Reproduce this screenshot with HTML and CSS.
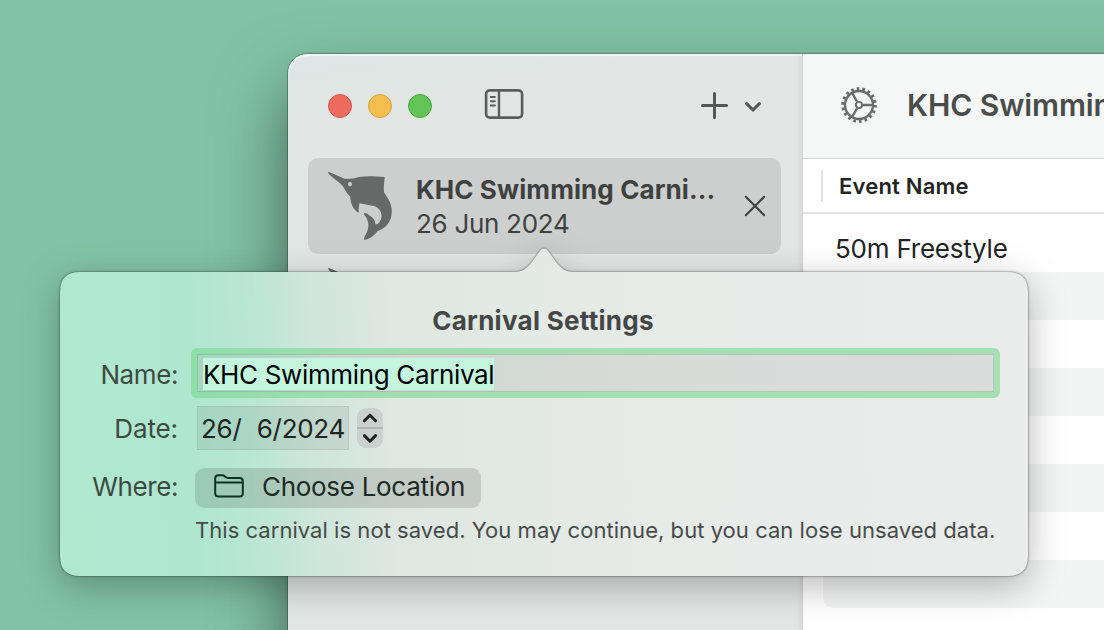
FILE: index.html
```html
<!DOCTYPE html>
<html lang="en">
<head>
<meta charset="utf-8">
<title>KHC Swimming Carnival</title>
<link rel="stylesheet" href="styles.css">
</head>
<body>
<svg class="defs" width="0" height="0" aria-hidden="true">
  <symbol id="marlin" viewBox="0 0 80 85">
    <path fill-rule="evenodd" d="M8.4 10 C8.7 9.7 9.5 10 10.3 10.5 L24.5 16.8 C29 16.8 32 16.6 34.5 16.2 C41 14.3 48 13.6 64.7 15 C64.5 20 63.2 25 64 30 C66.5 35 71.8 40 71.8 49.5 C71.8 60 65 67 57.5 69 C55 73 50 77 44.3 78 C43.5 76 44.8 74.5 45.7 72.5 C50.5 64 48.5 58 43.7 52 C44.5 50.3 47 51 49.5 53.5 C54 56 55 58.5 55.5 62.5 C58 62.8 60.8 59 61.5 55 C62.3 49 57 44 52.5 43.8 L39.5 41.2 C38.8 44 38.5 47 38.7 50.7 C34.8 49 31.5 44 30.6 38 L30.2 34.8 C27 31.5 25.5 29 23.7 25.5 C22 22 17 19 9.5 12.7 C8.4 11.8 8 10.7 8.4 10 Z M30 20 a2 2.2 0 1 0 .01 0 Z"/>
  </symbol>
</svg>

<div class="window">
  <aside class="sidebar">
    <header class="sidebar-bar">
      <div class="lights">
        <span class="light close"></span>
        <span class="light minimise"></span>
        <span class="light zoom"></span>
      </div>
      <svg class="toggle" width="40" height="32" viewBox="0 0 40 32" fill="none" stroke="#5b5d5c" stroke-linecap="round">
        <rect x="2.1" y="2.4" width="36" height="27.2" rx="3.6" stroke-width="2.6"/>
        <path d="M15 3v26" stroke-width="2.4"/>
        <path d="M6.8 9h4M6.8 13.3h4M6.8 17.6h4" stroke-width="2"/>
      </svg>
      <svg class="add" width="28" height="28" viewBox="0 0 28 28" fill="none" stroke="#555756" stroke-width="3" stroke-linecap="round">
        <path d="M14.500 1.500v24M2.500 13.500h24"/>
      </svg>
      <svg class="more" width="18" height="12" viewBox="0 0 18 12" fill="none" stroke="#555756" stroke-width="3.1" stroke-linecap="round" stroke-linejoin="round">
        <path d="M2.6 2.6L9 9l6.4-6.4"/>
      </svg>
    </header>
    <div class="carnival selected">
      <svg class="marlin" width="80" height="85"><use href="#marlin"/></svg>
      <div class="carnival-text">
        <div class="carnival-name">KHC Swimming Carni...</div>
        <div class="carnival-date">26 Jun 2024</div>
      </div>
      <svg class="remove" width="22" height="22" viewBox="0 0 22 22" stroke="#3d3f3e" stroke-width="2" stroke-linecap="round">
        <path d="M1.8 1.8l18.4 18.4M20.2 1.8L1.8 20.2"/>
      </svg>
    </div>
    <div class="carnival">
      <svg class="marlin" width="80" height="85"><use href="#marlin"/></svg>
    </div>
  </aside>
  <main class="content">
    <header class="title-bar">
      <svg class="gear" width="38" height="38" viewBox="-19 -19 38 38" fill="none" stroke="#6a6c6b">
        <circle r="16.3" stroke-width="3" stroke-dasharray="2.7 2.99"/>
        <circle r="14" stroke-width="2.3"/>
        <circle r="3.1" stroke-width="1.9"/>
        <path d="M4 0H14M-2 -3.5L-7 -12.1M-2 3.5L-7 12.1" stroke-width="2.3"/>
      </svg>
      <h1>KHC Swimming Carnival</h1>
    </header>
    <div class="table-head"><span>Event Name</span></div>
    <div class="table">
      <div class="row first">50m Freestyle</div>
      <div class="row alt"></div>
      <div class="row"></div>
      <div class="row alt"></div>
      <div class="row"></div>
      <div class="row alt"></div>
      <div class="row"></div>
      <div class="row alt"></div>
    </div>
  </main>
</div>

<div class="popover">
  <svg class="popover-shape" width="968" height="330" viewBox="0 -26 968 330">
    <defs>
      <linearGradient id="glass" x1="0" x2="968" y1="30" y2="0" gradientUnits="userSpaceOnUse">
        <stop offset="0" stop-color="#b1e8d0"/>
        <stop offset=".13" stop-color="#afe6cf"/>
        <stop offset=".19" stop-color="#b9e6d2"/>
        <stop offset=".26" stop-color="#cfe6db"/>
        <stop offset=".35" stop-color="#e0e7e2"/>
        <stop offset=".6" stop-color="#e6ebe8"/>
        <stop offset="1" stop-color="#ebecec"/>
      </linearGradient>
    </defs>
    <path fill="url(#glass)" d="M20 0H453C462 0 466 -3 470 -7.500L479.500 -20.500C482 -24.500 486 -24.500 488.500 -20.500L498 -7.500C502 -3 506 0 515 0H948Q968 0 968 20V284Q968 304 948 304H20Q0 304 0 284V20Q0 0 20 0Z"/>
  </svg>
  <div class="popover-body">
    <h2>Carnival Settings</h2>
    <div class="form">
      <label class="l-name">Name:</label>
      <div class="field"><span class="highlight">KHC Swimming Carnival</span></div>
      <label class="l-date">Date:</label>
      <div class="date-line">
        <div class="date">26/<span class="month">6/2024</span></div>
        <div class="stepper">
          <svg width="26" height="40" viewBox="0 0 26 40" fill="none" stroke="#1d2421" stroke-width="3" stroke-linecap="round" stroke-linejoin="round">
            <path d="M7.400 12.800L13 7.200l5.600 5.600M7.400 27.600L13 33.200l5.600-5.600"/>
          </svg>
        </div>
      </div>
      <label class="l-where">Where:</label>
      <div class="where-line">
        <button class="choose">
          <svg width="30" height="24" viewBox="0 0 30 24" fill="none" stroke="#0c3322" stroke-width="2" stroke-linejoin="round">
            <path d="M1.200 19.500V4.500Q1.200 1.200 4.500 1.200H8.200Q9.600 1.200 10.700 2.200L11.600 3Q12.600 3.900 14 3.900H25.500Q28.800 3.900 28.800 7V19.500Q28.800 22.600 25.500 22.600H4.500Q1.200 22.600 1.200 19.500ZM1.200 8.500H28.800"/>
          </svg>
          <span>Choose Location</span>
        </button>
      </div>
      <p class="note">This carnival is not saved. You may continue, but you can lose unsaved data.</p>
    </div>
  </div>
</div>
</body>
</html>
```

FILE: styles.css
```css
* { box-sizing: border-box; }

body {
  margin: 0;
  width: 1104px;
  height: 630px;
  overflow: hidden;
  position: relative;
  padding: 54px 0 0 288px;
  background: #82c3a6;
  font-family: Inter, Roboto, sans-serif;
  font-size: 26px;
  line-height: 32px;
  color: #232524;
  white-space: nowrap;
}

h1, h2, p { margin: 0; }
svg { display: block; flex: none; }
.defs { position: absolute; }

.window {
  display: flex;
  width: 1400px;
  height: 900px;
  border-radius: 20px;
  box-shadow: 0 0 1px 1px rgba(0, 0, 0, .28), 0 36px 70px rgba(0, 0, 0, .5);
}

.sidebar {
  width: 515px;
  flex: none;
  padding: 0 21px 0 20px;
  border-radius: 20px 0 0 0;
  border-right: 1px solid #cdd1cf;
  background: linear-gradient(170deg, #dde7e5 0, #e1e6e4 70px, #e4e6e5 130px);
  box-shadow: inset 0 2px 1px rgba(255, 255, 255, .6), inset -5px 0 5px -3px rgba(0, 0, 0, .06);
}

.sidebar-bar {
  display: flex;
  align-items: center;
  height: 104px;
  padding: 0 19px 0 20px;
}
.lights { display: flex; gap: 16px; }
.light { width: 24px; height: 24px; border-radius: 50%; border: 1px solid; }
.close { background: #ed6a5f; border-color: #d5564c; }
.minimise { background: #f5bf4f; border-color: #d8a13a; }
.zoom { background: #61c655; border-color: #4aa73c; }
.toggle { margin-left: 52px; margin-top: -4px; }
.add { margin-left: auto; }
.more { margin: 1px 0 0 16px; }

.carnival {
  display: flex;
  align-items: center;
  height: 96px;
  padding: 0 15px 0 12px;
  border-radius: 10px;
}
.selected { background: #cdcfce; }
.marlin { fill: #666967; margin-top: -3px; }
.carnival-text { margin: 2px 0 0 16px; line-height: 34px; color: #3f4140; }
.carnival-name { font-weight: 700; letter-spacing: .09px; }
.carnival-date { letter-spacing: -.3px; }
.remove { margin-left: auto; }

.content { flex: 1; background: #fff; }
.title-bar {
  display: flex;
  align-items: center;
  height: 105px;
  padding: 0 0 2px 37px;
  background: #f4f7f6;
  border-bottom: 1px solid #d6d9d8;
}
h1 { margin-left: 29px; font-size: 30px; font-weight: 600; color: #4a4c4b; letter-spacing: -.1px; }
.table-head {
  height: 55px;
  padding: 11px 0 0 18px;
  border-bottom: 2px solid #e2e3e3;
  font-size: 22px;
  font-weight: 600;
  letter-spacing: .2px;
}
.table-head span { display: block; padding-left: 16px; border-left: 2px solid #e2e3e3; }
.table { padding-left: 20px; }
.row { height: 48px; border-radius: 10px 0 0 10px; }
.first { height: 58px; padding: 19px 0 0 12px; letter-spacing: -.22px; }
.alt { background: #f3f5f4; }

/* The popover floats over the window. */
.popover { position: absolute; left: 60px; top: 272px; width: 968px; height: 304px; }
.popover-shape {
  position: absolute;
  left: 0;
  top: -26px;
  overflow: visible;
  filter: drop-shadow(0 0 1px rgba(0, 0, 0, .65)) drop-shadow(0 10px 18px rgba(0, 0, 0, .28));
}
.popover-body { position: relative; padding: 33px 28px 0 25px; color: #3d4a43; }
h2 { padding-left: 1px; font-size: 26px; line-height: 32px; font-weight: 700; text-align: center; color: #454746; letter-spacing: .28px; }
.form {
  display: grid;
  grid-template-columns: 93px 809px;
  column-gap: 13px;
  margin-top: 11px;
}
label { text-align: right; letter-spacing: -.4px; }
.l-name { padding-top: 11px; }
.l-date { padding-top: 15px; letter-spacing: -.1px; }
.l-where { padding-top: 13px; }
.field {
  height: 50px;
  border: 6px solid rgba(120, 216, 140, .6);
  border-radius: 6px;
  background: rgba(0, 0, 0, .065);
  background-clip: padding-box;
  box-shadow: inset 0 0 0 1px rgba(50, 130, 80, .25);
  padding: 4px 6px;
  color: #000;
}
.highlight { display: inline-block; height: 32px; line-height: 34px; width: 291px; background: #c4f6de; letter-spacing: -.35px; }
.date-line { display: flex; align-items: center; gap: 8px; padding: 8px 0 8px 6px; }
.date {
  width: 152px;
  height: 44px;
  padding: 6px 3px;
  background: rgba(0, 0, 0, .065);
  border: 1px solid rgba(0, 0, 0, .06);
  color: #202422;
  display: flex;
  justify-content: space-between;
  letter-spacing: -.3px;
}
.stepper {
  border-radius: 9px;
  background: linear-gradient(#cbd1ce 19px, #b1b7b4 19px, #b1b7b4 21px, #cbd1ce 21px);
}
.where-line { padding: 10px 0 0 4px; }
.choose {
  display: flex;
  align-items: center;
  width: 286px;
  height: 40px;
  padding: 0 0 2px 19px;
  border: 0;
  border-radius: 9px;
  background: rgba(0, 0, 0, .12);
  font: inherit;
  color: #1e2a25;
}
.choose svg { margin-top: -2px; }
.choose span { margin-left: 18px; letter-spacing: -.3px; }
.note { grid-column: 2; padding-left: 4px; margin-top: 6px; font-size: 22px; color: #474b49; letter-spacing: .04px; }
```
